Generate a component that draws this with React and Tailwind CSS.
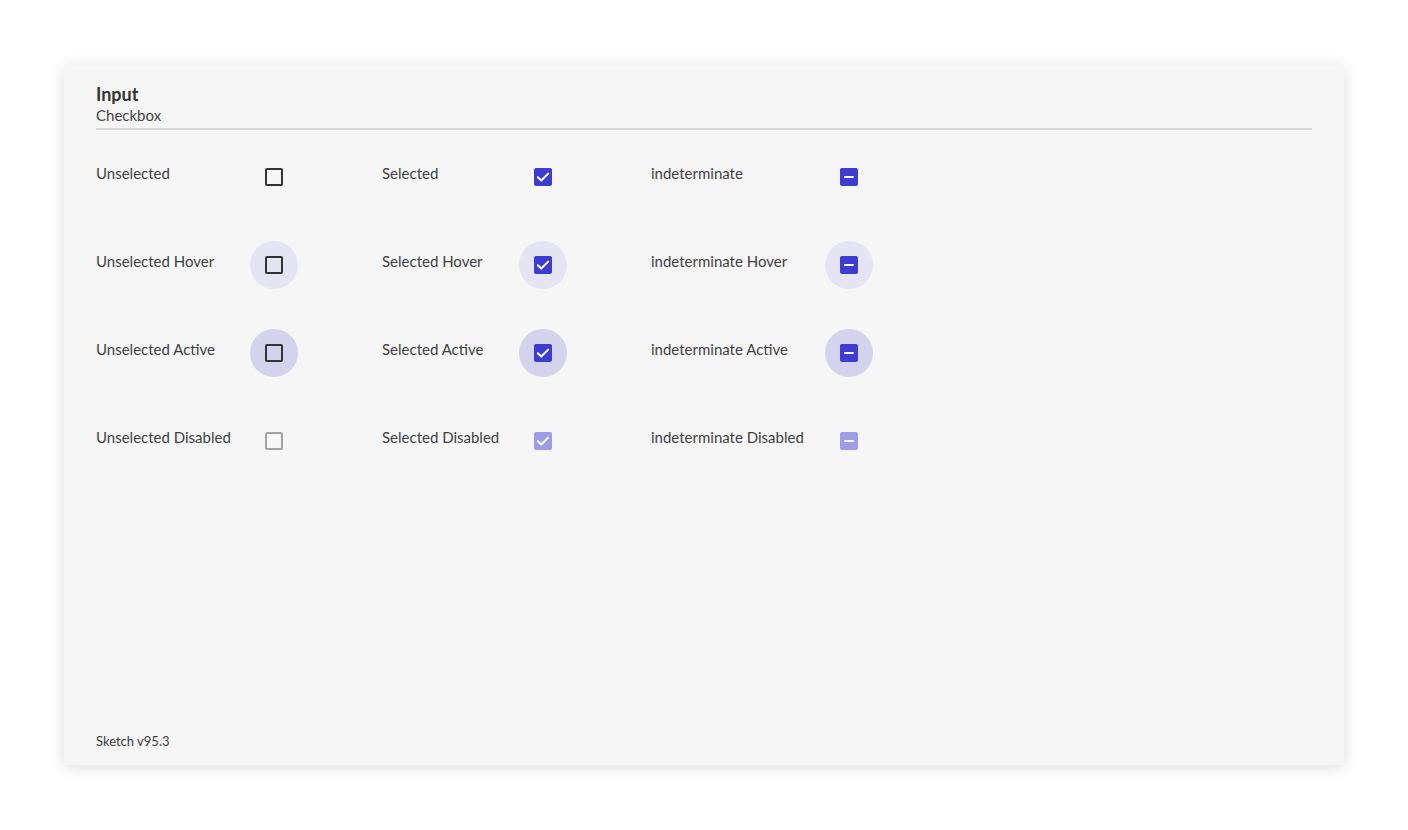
import React from "react";

function Box({ kind, disabled }) {
  if (kind === "un") {
    return (
      <div
        className={
          "w-[18px] h-[18px] rounded-[2px] border-2 " +
          (disabled ? "border-[#a3a3a3]" : "border-[#333333]")
        }
      />
    );
  }
  return (
    <div
      className={
        "w-[18px] h-[18px] rounded-[2px] flex items-center justify-center " +
        (disabled ? "bg-[#9d9de6]" : "bg-[#3d3dcf]")
      }
    >
      {kind === "sel" ? (
        <svg width="18" height="18" viewBox="0 0 18 18">
          <path d="M3.8 9.2 L7.2 12.5 L14.2 5.6" fill="none" stroke="white" strokeWidth="2" strokeLinecap="round" strokeLinejoin="round" />
        </svg>
      ) : (
        <div className="w-[10px] h-[2px] bg-white rounded-[1px]" />
      )}
    </div>
  );
}

function Item({ label, kind, state, labelW }) {
  const circle =
    state === "hover" ? "bg-[#e5e4f3]" : state === "active" ? "bg-[#d3d3ee]" : "";
  return (
    <div className="flex items-start">
      <div className={"pt-[10px] leading-5 text-[15px] text-[#3f3f3f] " + labelW}>{label}</div>
      <div className={"w-12 h-12 rounded-full flex items-center justify-center " + circle}>
        <Box kind={kind} disabled={state === "disabled"} />
      </div>
    </div>
  );
}

export default function App() {
  const rows = [
    { suf: "", state: "normal" },
    { suf: " Hover", state: "hover" },
    { suf: " Active", state: "active" },
    { suf: " Disabled", state: "disabled" },
  ];
  return (
    <div className="min-h-[830px] bg-white pt-[65px] pl-[64px]" style={{ fontFamily: "Lato, 'Noto Sans', sans-serif" }}>
      <div className="w-[1280px] h-[700px] bg-[#f6f6f6] shadow-[0_2px_14px_rgba(0,0,0,0.14)] flex flex-col px-8 pt-[19px] pb-[15px]">
        <div className="text-[18px] font-bold leading-[21px] text-[#333333]">Input</div>
        <div className="text-[15px] leading-5 text-[#444444]">Checkbox</div>
        <div className="mt-[3px] h-[2px] bg-[#d6d6d6]" />
        <div className="mt-[23px] flex flex-col gap-10">
          {rows.map((r) => (
            <div key={r.state} className="flex gap-[84px]">
              <Item label={"Unselected" + r.suf} kind="un" state={r.state} labelW="w-[154px]" />
              <Item label={"Selected" + r.suf} kind="sel" state={r.state} labelW="w-[137px]" />
              <Item label={"indeterminate" + r.suf} kind="ind" state={r.state} labelW="w-[174px]" />
            </div>
          ))}
        </div>
        <div className="mt-auto text-[13px] leading-[18px] text-[#3a3a3a]">Sketch v95.3</div>
      </div>
    </div>
  );
}
